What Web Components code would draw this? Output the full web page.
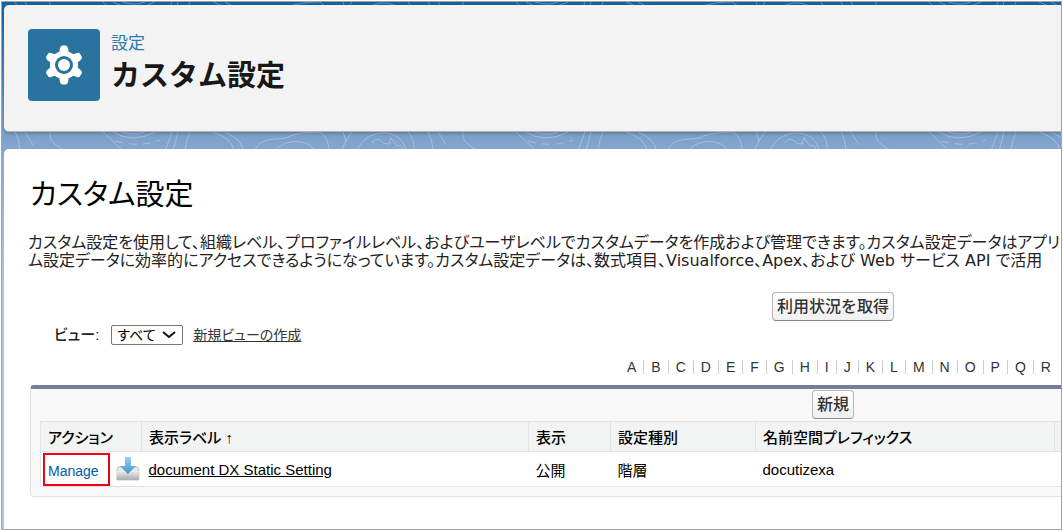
<!DOCTYPE html>
<html lang="ja">
<head>
<meta charset="utf-8">
<title>カスタム設定</title>
<style>
	body {
		margin: 0;
		padding: 1px;
		background: #fff;
		color: #222;
		font-family: "Liberation Sans", "Noto Sans CJK JP", sans-serif;
		font-size: 15px;
	}
</style>
</head>
<body>
<setup-frame>
	<page-header slot="header" label="設定" heading="カスタム設定"></page-header>
	<settings-page></settings-page>
</setup-frame>
<script>
class SetupFrame extends HTMLElement {
	constructor(){
		super();
		this.attachShadow({mode:"open"});
		this.shadowRoot.innerHTML = `
			<style>
				:host {
					display: flex;
					flex-direction: column;
					position: relative;
					box-sizing: border-box;
					min-height: calc(100vh - 2px);
					border: 1px solid #a3a3a3;
					padding: 3px 0 0 2px;
					overflow: hidden;
					background: linear-gradient(#14609f 0, #1b65a4 6px, #799fc9 130px, #86a7d0 150px, #b0c4e4 280px);
				}
				#pattern {
					position: absolute;
					top: 0;
					left: 0;
					width: 100%;
					height: 150px;
				}
				main {
					display: block;
					position: relative;
					flex: 1;
					margin-top: 17px;
					border-radius: 5px 0 0 0;
					background: #fff;
					overflow: hidden;
				}
				slot[name=header] {
					display: block;
					position: relative;
				}
			</style>
			<svg id="pattern" aria-hidden="true">
				<defs>
					<pattern id="topo" width="413" height="130" patternUnits="userSpaceOnUse">
						<g fill="none" stroke="#fff" stroke-opacity=".3">
							<path d="M13 0Q17 6 18 19M23 0L31 13M48 0C46 10 56 14 63 19M101 0L120 18"/>
							<path d="M111 0Q130 12 153 0M120 0Q133 4 143 0"/>
							<path d="M113 9Q138 16 158 8" stroke-dasharray="8 6"/>
							<path d="M170 0L163 19M176 0L171 19M188 0Q184 8 183 19M211 0Q230 6 232 19M223 0Q241 8 241 19"/>
							<path d="M253 18C260 2 283 10 288 4Q300 0 318 0M273 19C283 5 310 8 312 19M318 0Q327 6 327 19M341 0L344 9L339 19M344 9L350 0"/>
							<path d="M355 19C363 -4 400 -6 404 19M370 11q2-5 8-3q4 5 9 4l2-6l6 8q4-2 6 3M406 0Q413 8 412 19"/>
						</g>
					</pattern>
				</defs>
				<rect width="100%" height="150" fill="url(#topo)"/>
			</svg>
			<slot name="header"></slot>
			<main><slot></slot></main>
		`;
	}
}
window.customElements.define("setup-frame",SetupFrame);

class PageHeader extends HTMLElement {
	constructor(){
		super();
		this.attachShadow({mode:"open"});
		this.shadowRoot.innerHTML = `
			<style>
				:host {
					display: flex;
					align-items: flex-start;
					gap: 11px;
					box-sizing: border-box;
					min-height: 127px;
					padding: 24px;
					border-bottom: 1px solid #b3b3b3;
					border-radius: 5px 0 0 5px;
					background: #f3f3f3;
					box-shadow: 0 2px 3px #00000030;
				}
				#icon {
					display: block;
					width: 72px;
					height: 72px;
					border-radius: 4px;
					background: #2a739e;
				}
				#label {
					margin: 5px 0 0;
					font-size: 17px;
					line-height: 20px;
					color: #2a7ab0;
				}
				h1 {
					margin: 0;
					font-size: 29px;
					line-height: 44px;
					color: #181818;
				}
			</style>
			<svg id="icon" viewBox="0 0 72 72" aria-hidden="true">
				<g fill="#fff">
					<circle cx="36" cy="36" r="14"/>
					<path id="tooth" d="M31 25l1-6q.5-2.500 2.500-2.500h3q2 0 2.500 2.500l1 6z"/>
					<use href="#tooth" transform="rotate(60 36 36)"/>
					<use href="#tooth" transform="rotate(120 36 36)"/>
					<use href="#tooth" transform="rotate(180 36 36)"/>
					<use href="#tooth" transform="rotate(240 36 36)"/>
					<use href="#tooth" transform="rotate(300 36 36)"/>
				</g>
				<circle cx="36" cy="36" r="7.500" fill="none" stroke="#2a739e" stroke-width="3"/>
			</svg>
			<div>
				<p id="label"></p>
				<h1></h1>
			</div>
		`;
	}

	connectedCallback(){
		this.shadowRoot.getElementById("label").textContent = this.getAttribute("label");
		this.shadowRoot.querySelector("h1").textContent = this.getAttribute("heading");
	}
}
window.customElements.define("page-header",PageHeader);

class SetupButton extends HTMLElement {
	constructor(){
		super();
		this.attachShadow({mode:"open"});
		this.shadowRoot.innerHTML = `
			<style>
				:host {
					display: block;
				}
				button {
					display: block;
					height: 29px;
					padding: 0 4px;
					border: 1px solid #b5b5b5;
					border-bottom-color: #888;
					border-radius: 4px;
					background: linear-gradient(#fff, #f0f0f0);
					color: #333;
					font: 500 16px/24px "Liberation Sans", "Noto Sans CJK JP", sans-serif;
				}
			</style>
			<button type="button"><slot></slot></button>
		`;
	}
}
window.customElements.define("setup-button",SetupButton);

class ViewPicker extends HTMLElement {
	constructor(){
		super();
		this.attachShadow({mode:"open"});
		this.shadowRoot.innerHTML = `
			<style>
				:host {
					display: flex;
					align-items: center;
					height: 20px;
					font-size: 14px;
					line-height: 20px;
					font-feature-settings: "palt";
				}
				label {
					margin-right: 12px;
					font-size: 15px;
					font-weight: 500;
				}
				#box {
					display: grid;
					align-items: center;
					margin-right: 10px;
				}
				select, svg {
					grid-area: 1 / 1;
				}
				select {
					appearance: none;
					width: 72px;
					height: 20px;
					padding: 0 5px;
					border: 1px solid #777;
					border-radius: 2px;
					background: #fff;
					color: #000;
					font: inherit;
					line-height: 18px;
					font-feature-settings: inherit;
				}
				svg {
					justify-self: end;
					margin-right: 7px;
					pointer-events: none;
				}
				a {
					color: #333;
				}
			</style>
			<label for="view">ビュー:</label>
			<span id="box">
				<select id="view"><option>すべて</option></select>
				<svg width="14" height="8" viewBox="0 0 14 8" fill="none" stroke="#111" stroke-width="2" aria-hidden="true"><path d="M1 1l6 5l6-5"/></svg>
			</span>
			<a href="#">新規ビューの作成</a>
		`;
	}
}
window.customElements.define("view-picker",ViewPicker);

class LetterIndex extends HTMLElement {
	constructor(){
		super();
		this.attachShadow({mode:"open"});
		this.shadowRoot.innerHTML = `
			<style>
				:host {
					display: flex;
					font-size: 14px;
					line-height: 14px;
				}
				a {
					padding: 0 7px;
					color: #333;
					text-decoration: none;
				}
				a + a {
					border-left: 1px solid #ccc;
				}
			</style>
		`;
		for (const letter of "ABCDEFGHIJKLMNOPQR"){
			const link = document.createElement("a");
			link.href = "#";
			link.textContent = letter;
			this.shadowRoot.append(link);
		}
	}
}
window.customElements.define("letter-index",LetterIndex);

class SettingsList extends HTMLElement {
	constructor(){
		super();
		this.attachShadow({mode:"open"});
		this.shadowRoot.innerHTML = `
			<style>
				:host {
					display: block;
					padding: 1px 9px 9px;
					border: 1px solid #e0e3e5;
					border-top: 4px solid #747e96;
					border-radius: 4px;
					background: #f8f8f8;
				}
				#actions {
					display: flex;
					justify-content: center;
					height: 31px;
				}
				table {
					width: 100%;
					border-collapse: collapse;
					table-layout: fixed;
					background: #fff;
					color: #000;
				}
				th, td {
					box-sizing: border-box;
					padding: 0 7px;
					border-bottom: 1px solid #e0e3e5;
					text-align: left;
				}
				th {
					height: 30px;
					border: 1px solid #e0e3e5;
					background: #f2f3f3;
					font-weight: 500;
					font-feature-settings: "palt";
				}
				td {
					height: 35px;
				}
				td:first-child {
					padding: 0 2px;
					border-left: 1px solid #e0e3e5;
				}
				.short { width: 101px; }
				.label { width: 387px; }
				.shown { width: 82px; }
				.type { width: 145px; }
				.prefix { width: 299px; }
				#row-actions {
					display: flex;
					align-items: center;
					gap: 6px;
				}
				#manage {
					box-sizing: border-box;
					width: 67px;
					height: 33px;
					padding-left: 3px;
					border: 2px solid #f00010;
					color: #015ba7;
					font-size: 14px;
					line-height: 32px;
					text-decoration: none;
				}
				#name {
					color: #000;
				}
			</style>
			<div id="actions"><setup-button>新規</setup-button></div>
			<table>
				<thead>
					<tr>
						<th class="short" scope="col">アクション</th>
						<th class="label" scope="col">表示ラベル ↑</th>
						<th class="shown" scope="col">表示</th>
						<th class="type" scope="col">設定種別</th>
						<th class="prefix" scope="col">名前空間プレフィックス</th>
						<th></th>
					</tr>
				</thead>
				<tbody>
					<tr>
						<td>
							<div id="row-actions">
								<a id="manage" href="#">Manage</a>
								<svg width="24" height="24" viewBox="0 0 24 24" aria-hidden="true">
									<defs>
										<linearGradient id="tray" x2="0" y2="1"><stop stop-color="#eee"/><stop offset="1" stop-color="#aaa"/></linearGradient>
										<linearGradient id="arrow" x2="0" y2="1"><stop stop-color="#9bd0ee"/><stop offset="1" stop-color="#3c96cf"/></linearGradient>
									</defs>
									<path d="M2 10h20l1 4v9H1v-9z" fill="#e9e9e9" stroke="#c4c4c4"/>
									<path d="M1 14h22v9H1z" fill="url(#tray)"/>
									<path d="M9 0h6v9h5l-8 8l-8-8h5z" fill="url(#arrow)"/>
								</svg>
							</div>
						</td>
						<td><a id="name" href="#">document DX Static Setting</a></td>
						<td>公開</td>
						<td>階層</td>
						<td>docutizexa</td>
						<td></td>
					</tr>
				</tbody>
			</table>
		`;
	}
}
window.customElements.define("settings-list",SettingsList);

class SettingsPage extends HTMLElement {
	constructor(){
		super();
		this.attachShadow({mode:"open"});
		// the list is wider than most windows, the frame clips what runs over
		this.shadowRoot.innerHTML = `
			<style>
				:host {
					display: flex;
					flex-direction: column;
					min-width: 1606px;
					padding: 24px 26px 32px;
				}
				h2 {
					margin: 0;
					font-size: 29px;
					line-height: 44px;
					font-weight: 400;
					color: #000;
					font-feature-settings: "palt";
				}
				p {
					margin: 17px 0 0 -2px;
					font-family: "DejaVu Sans", "Noto Sans CJK JP", sans-serif;
					font-size: 16px;
					line-height: 18px;
					white-space: nowrap;
					font-feature-settings: "palt";
				}
				#usage {
					align-self: center;
					margin-top: 22px;
				}
				view-picker {
					margin: 4px 0 0 24px;
				}
				letter-index {
					margin: 15px 0 11px 590px;
				}
			</style>
			<h2>カスタム設定</h2>
			<p>カスタム設定を使用して、組織レベル、プロファイルレベル、およびユーザレベルでカスタムデータを作成および管理できます。カスタム設定データはアプリ<br>ム設定データに効率的にアクセスできるようになっています。カスタム設定データは、数式項目、Visualforce、Apex、および Web サービス API で活用</p>
			<setup-button id="usage">利用状況を取得</setup-button>
			<view-picker></view-picker>
			<letter-index></letter-index>
			<settings-list></settings-list>
		`;
	}
}
window.customElements.define("settings-page",SettingsPage);
</script>
</body>
</html>
